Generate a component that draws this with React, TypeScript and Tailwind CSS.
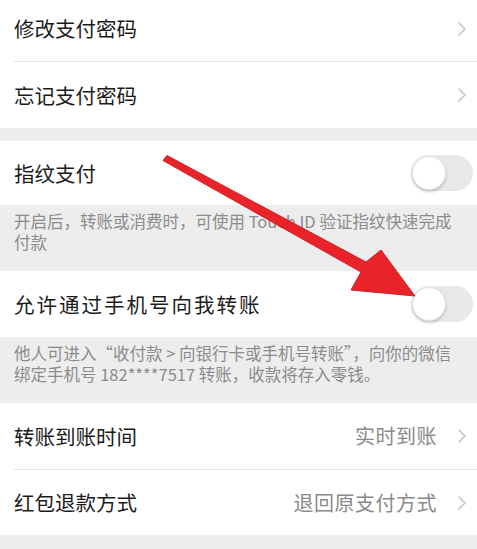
import React from "react";

const font = { fontFamily: '"Noto Sans CJK SC", "Liberation Sans", sans-serif' };

function Chevron() {
  return (
    <svg width="10" height="16" viewBox="0 0 10 16" className="shrink-0">
      <path d="M2 2 L8 8 L2 14" fill="none" stroke="#c4c4c6" strokeWidth="1.6" strokeLinecap="round" strokeLinejoin="round" />
    </svg>
  );
}

function Toggle() {
  return (
    <div className="w-[62px] h-[36px] rounded-full bg-[#e8e8ea] relative shrink-0">
      <div className="absolute left-[1px] top-[1px] w-[34px] h-[34px] rounded-full bg-white shadow-[0_2px_3px_rgba(0,0,0,0.18)] border border-[#e4e4e4]" />
    </div>
  );
}

function LinkRow({ label, value, h, extra }: { label: string; value?: string; h: string; extra?: string }) {
  return (
    <div className={`flex items-center justify-between pl-[14px] pr-[10px] bg-white ${h} ${extra ?? ""}`}>
      <span className="text-[20.5px] text-[#1b1b1b]">{label}</span>
      <div className="flex items-center gap-[20px]">
        {value && <span className="text-[20px] text-[#8a8a8a] tracking-[0.5px]">{value}</span>}
        <Chevron />
      </div>
    </div>
  );
}

function Note({ lines }: { lines: string[] }) {
  return (
    <div className="h-[66px] pl-[14px] pr-[8px] pt-[6px] text-[16.5px] leading-[21px] text-[#8c8c8c] flex flex-col">
      {lines.map((l) => (
        <div key={l} className="whitespace-nowrap">{l}</div>
      ))}
    </div>
  );
}

export default function App() {
  return (
    <div className="w-[477px] h-[549px] bg-[#ededed] relative overflow-hidden" style={font}>
      <LinkRow label="修改支付密码" h="h-[61px]" extra="pb-[4px]" />
      <div className="bg-white pl-[13px]">
        <div className="h-px bg-[#e8e8e8]" />
      </div>
      <LinkRow label="忘记支付密码" h="h-[66px]" />

      <div className="h-[13px]" />

      <div className="flex items-center justify-between pl-[14px] pr-[4px] bg-white h-[64px]">
        <span className="text-[20.5px] text-[#1b1b1b]">指纹支付</span>
        <Toggle />
      </div>
      <Note lines={["开启后，转账或消费时，可使用 Touch ID 验证指纹快速完成", "付款"]} />

      <div className="flex items-center justify-between pl-[14px] pr-[4px] bg-white h-[66px]">
        <span className="text-[20.5px] text-[#1b1b1b] tracking-[2px]">允许通过手机号向我转账</span>
        <Toggle />
      </div>
      <Note lines={["他人可进入“收付款 > 向银行卡或手机号转账”，向你的微信", "绑定手机号 182****7517 转账，收款将存入零钱。"]} />

      <LinkRow label="转账到账时间" value="实时到账" h="h-[66px]" />
      <div className="bg-white pl-[13px]">
        <div className="h-px bg-[#e8e8e8]" />
      </div>
      <LinkRow label="红包退款方式" value="退回原支付方式" h="h-[65px]" />

      <svg className="absolute left-0 top-0 pointer-events-none" width="477" height="549" viewBox="0 0 477 549">
        <polygon
          points="167,155.5 366,262 381,250 415,296 351,290 361,272 163,160.5"
          fill="#e8242a"
          stroke="#d51d22"
          strokeWidth="1"
          strokeLinejoin="round"
        />
      </svg>
    </div>
  );
}
